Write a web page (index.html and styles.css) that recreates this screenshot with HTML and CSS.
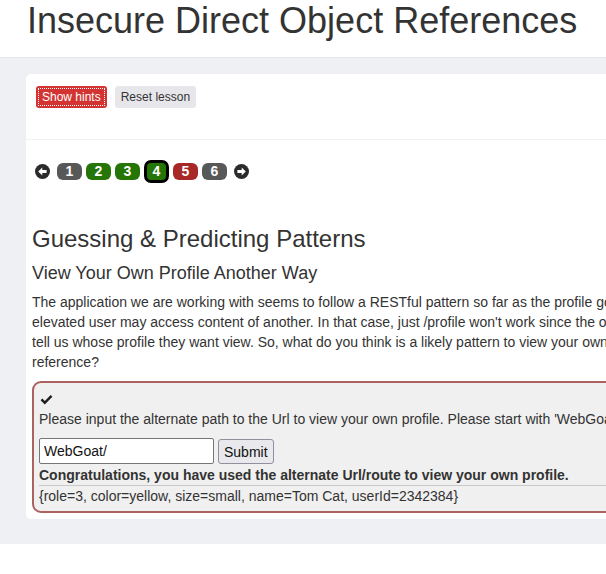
FILE: index.html
```html
<!DOCTYPE html>
<html lang="en">
<head>
<meta charset="utf-8">
<title>Insecure Direct Object References</title>
<link rel="stylesheet" href="styles.css">
</head>
<body>
<header class="page-header">
  <h1 class="page-title">Insecure Direct Object References</h1>
</header>
<main class="lesson-area">
  <section class="lesson-card">
    <div class="lesson-toolbar">
      <button class="btn btn-hints" type="button">Show hints</button>
      <button class="btn btn-reset" type="button">Reset lesson</button>
    </div>
    <div class="lesson-body">
      <nav class="page-nav">
        <span class="nav-arrow">
          <svg width="15" height="15" viewBox="0 0 15 15"><circle cx="7.5" cy="7.5" r="7.5" fill="#2b2b2b"/><path d="M3.2 7.5 L7.3 3.4 L7.3 5.9 L11.6 5.9 L11.6 9.1 L7.3 9.1 L7.3 11.6 Z" fill="#fff"/></svg>
        </span>
        <span class="page-link page-grey">1</span>
        <span class="page-link page-green">2</span>
        <span class="page-link page-green">3</span>
        <span class="page-link page-green page-current">4</span>
        <span class="page-link page-red">5</span>
        <span class="page-link page-grey">6</span>
        <span class="nav-arrow">
          <svg width="15" height="15" viewBox="0 0 15 15"><circle cx="7.5" cy="7.5" r="7.5" fill="#2b2b2b"/><path d="M11.8 7.5 L7.7 3.4 L7.7 5.9 L3.4 5.9 L3.4 9.1 L7.7 9.1 L7.7 11.6 Z" fill="#fff"/></svg>
        </span>
      </nav>

      <h2 class="lesson-title">Guessing &amp; Predicting Patterns</h2>
      <h3 class="lesson-subtitle">View Your Own Profile Another Way</h3>
      <p class="lesson-text">The application we are working with seems to follow a RESTful pattern so far as the profile goes. Many apps have roles in which an<br>elevated user may access content of another. In that case, just /profile won't work since the own user's session/authentication data won't<br>tell us whose profile they want view. So, what do you think is a likely pattern to view your own profile explicitly using a direct object<br>reference?</p>

      <div class="attack-box">
        <div class="attack-status">
          <svg width="13" height="10" viewBox="0 0 13 10"><path d="M0.6 5.2 L2.3 3.5 L4.8 6 L10.7 0.1 L12.4 1.8 L4.8 9.4 Z" fill="#1e1e1e"/></svg>
        </div>
        <div class="attack-prompt">Please input the alternate path to the Url to view your own profile. Please start with 'WebGoat' (i.e. disregard 'http://localhost:8080/')</div>
        <form class="attack-form">
          <input class="attack-input" type="text" value="WebGoat/">
          <button class="attack-submit" type="button">Submit</button>
        </form>
        <div class="attack-feedback">Congratulations, you have used the alternate Url/route to view your own profile.</div>
        <div class="attack-output">{role=3, color=yellow, size=small, name=Tom Cat, userId=2342384}</div>
      </div>
    </div>
  </section>
</main>
</body>
</html>
```

FILE: styles.css
```css
html, body {
  margin: 0;
  padding: 0;
  overflow: hidden;
  background: #fff;
}

body {
  font-family: "Liberation Sans", Arial, Helvetica, sans-serif;
  color: #333;
  width: 1200px;
}

.page-header {
  height: 57px;
  border-bottom: 1px solid #e4e5ea;
  padding-left: 27px;
}

.page-title {
  margin: 0;
  font-size: 36px;
  font-weight: normal;
  line-height: normal;
  color: #333;
}

.lesson-area {
  background: #eff0f4;
  padding: 16px 0 25px 26px;
}

.lesson-card {
  background: #fff;
  border-radius: 5px;
}

.lesson-toolbar {
  height: 66px;
  box-sizing: border-box;
  padding: 12px 10px 0;
  border-bottom: 1px solid #f2f2f4;
  display: flex;
  align-items: flex-start;
  gap: 8px;
}

.btn {
  font-family: "Liberation Sans", Arial, sans-serif;
  font-size: 12px;
  height: 22px;
  padding: 0 6px;
  border: none;
  border-radius: 3px;
  line-height: 22px;
}

.btn-hints {
  background: #d33431;
  color: #fff;
  outline: 1px dotted #fff;
  outline-offset: -3px;
}

.btn-reset {
  background: #e7e7eb;
  color: #333;
}

.lesson-body {
  padding: 0 0 6px 6px;
}

.page-nav {
  margin-top: 20px;
  margin-left: 3px;
  height: 22px;
  display: flex;
  align-items: center;
  gap: 4px;
}

.nav-arrow {
  display: flex;
  width: 15px;
  height: 15px;
}

.nav-arrow:first-child {
  margin-right: 3px;
}

.nav-arrow:last-child {
  margin-left: 3px;
}

.page-link {
  box-sizing: border-box;
  width: 25px;
  height: 17px;
  border-radius: 6px;
  color: #fff;
  font-weight: bold;
  font-size: 14px;
  line-height: 17px;
  text-align: center;
}

.page-grey { background: #585858; }
.page-green { background: #257507; }
.page-red { background: #a82828; }

.page-current {
  height: 23px;
  border: 3px solid #000;
  border-radius: 7px;
}

.lesson-title {
  margin: 44px 0 0;
  font-size: 24px;
  line-height: 26px;
  font-weight: normal;
}

.lesson-subtitle {
  margin: 11px 0 0;
  font-size: 18px;
  line-height: 20px;
  font-weight: normal;
}

.lesson-text {
  margin: 9px 0 0;
  font-size: 14px;
  line-height: 20px;
}

.attack-box {
  margin-top: 9px;
  border: 2px solid #ad6262;
  border-radius: 9px;
  background: #f0f0f0;
  padding: 7px 5px 5px;
  font-size: 14px;
}

.attack-status {
  height: 19px;
  display: flex;
  align-items: center;
  padding-left: 1px;
}

.attack-prompt {
  line-height: 20px;
}

.attack-form {
  margin: 9px 0 0;
  display: flex;
  align-items: flex-end;
  gap: 4px;
}

.attack-input {
  width: 175px;
  height: 26px;
  box-sizing: border-box;
  border: 1px solid #767676;
  border-radius: 2px;
  padding: 1px 4px;
  font-family: "Liberation Sans", Arial, sans-serif;
  font-size: 14px;
  color: #111;
  background: #fff;
}

.attack-submit {
  height: 25px;
  box-sizing: border-box;
  padding: 1px 5px;
  border: 1px solid #8f8f9d;
  border-radius: 3px;
  background: #e9e9ed;
  font-family: "Liberation Sans", Arial, sans-serif;
  font-size: 14px;
  color: #111;
}

.attack-feedback {
  font-weight: bold;
  line-height: 20px;
  padding-top: 1px;
  border-bottom: 1px solid #c8c8c8;
}

.attack-output {
  line-height: 20px;
}
```
